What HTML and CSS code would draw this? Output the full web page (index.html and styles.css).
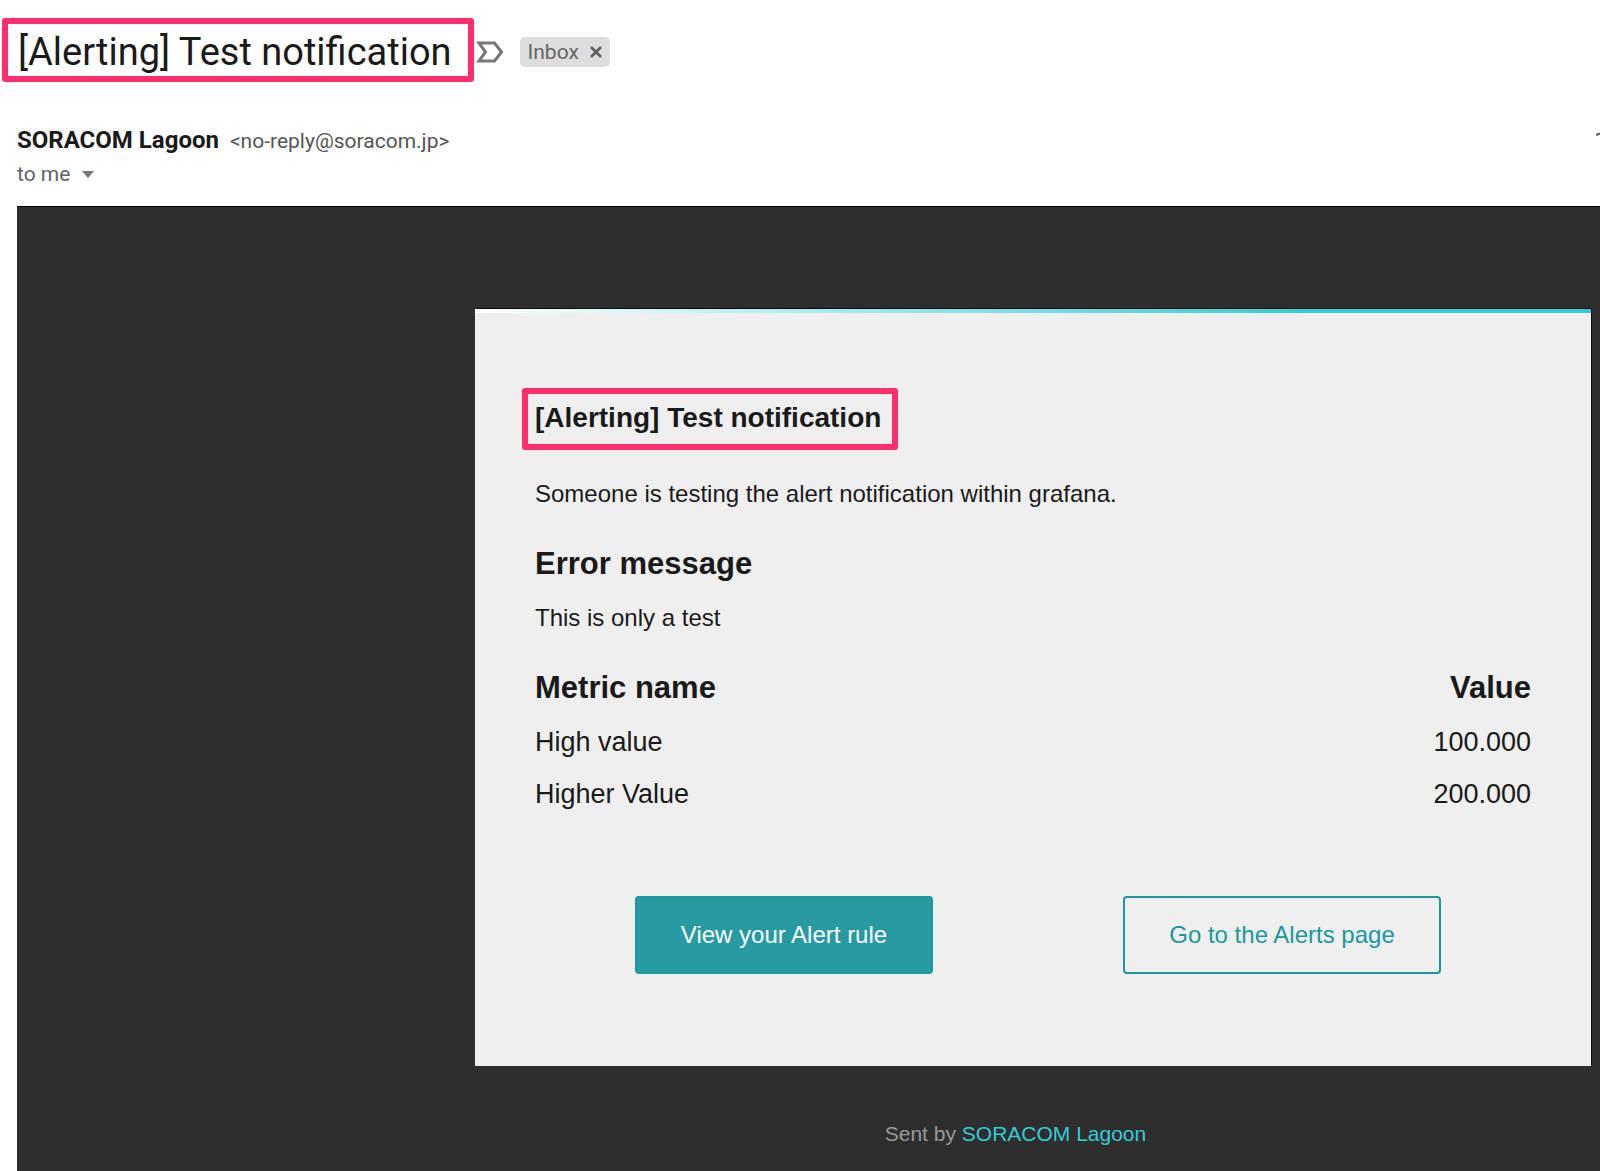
FILE: index.html
```html
<!DOCTYPE html>
<html lang="en">
<head>
<meta charset="utf-8">
<meta name="viewport" content="width=device-width, initial-scale=1">
<title>[Alerting] Test notification</title>
<link rel="stylesheet" href="styles.css">
</head>
<body>
<div class="message">
  <header class="subject">
    <h1 class="subject-title marked">[Alerting] Test notification</h1>
    <div class="subject-tags">
      <button class="importance" type="button" aria-label="Mark as important">
        <svg width="28" height="22" viewBox="0 0 28 22" fill="none" stroke="#777" stroke-width="3"><path d="M3 2H18.500L25.500 11L18.500 20H3L9.500 11Z"/></svg>
      </button>
      <span class="label">Inbox
        <button class="label-remove" type="button" aria-label="Remove label Inbox">
          <svg width="12" height="12" viewBox="0 0 12 12" stroke="#5c5c5c" stroke-width="2.500"><path d="M1 1L11 11M11 1L1 11"/></svg>
        </button>
      </span>
    </div>
  </header>

  <div class="sender">
    <div class="sender-from">
      <span class="sender-name">SORACOM Lagoon</span>
      <span class="sender-address">&lt;no-reply@soracom.jp&gt;</span>
    </div>
    <svg class="sender-time" width="4" height="4" viewBox="0 0 4 4" aria-hidden="true"><path d="M0 3L4 1.500" stroke="#555" stroke-width="2"/></svg>
  </div>
  <button class="recipient" type="button">to me
    <svg width="12" height="7" viewBox="0 0 12 7" fill="#777"><path d="M0 0H12L6 7Z"/></svg>
  </button>

  <main class="mail">
    <section class="card">
      <h2 class="card-title marked">[Alerting] Test notification</h2>
      <p class="card-text card-intro">Someone is testing the alert notification within grafana.</p>
      <h3 class="card-heading">Error message</h3>
      <p class="card-text">This is only a test</p>
      <table class="metrics">
        <thead><tr><th scope="col">Metric name</th><th scope="col">Value</th></tr></thead>
        <tbody>
          <tr><td>High value</td><td>100.000</td></tr>
          <tr><td>Higher Value</td><td>200.000</td></tr>
        </tbody>
      </table>
      <div class="actions">
        <a class="action action-primary" href="#rule">View your Alert rule</a>
        <a class="action" href="#alerts">Go to the Alerts page</a>
      </div>
    </section>
    <footer class="mail-footer">Sent by <a href="#lagoon">SORACOM Lagoon</a></footer>
  </main>
</div>
</body>
</html>
```
FILE: styles.css
```css
* { box-sizing: border-box; }

body {
  margin: 0;
  background: #fff;
  color: #1a1a1a;
  font-family: Roboto, "Liberation Sans", sans-serif;
}

h1, h2, h3, p { margin: 0; }

button {
  display: flex;
  border: 0;
  padding: 0;
  background: none;
  color: inherit;
  font: inherit;
}

.message {
  display: flex;
  flex-direction: column;
  min-height: 100vh;
  overflow-x: hidden;
}

.marked {
  border: 6px solid #ff2d6b;
  border-radius: 3px;
}

.subject {
  display: flex;
  align-items: center;
  padding: 18px 2px 0;
}

.subject-title {
  padding: 4px 16px 0 10px;
  font-size: 38px;
  font-weight: 400;
  line-height: 48px;
}

.subject-tags {
  display: flex;
  align-items: center;
  gap: 16px;
  padding: 3px 0 0 2px;
}

.label {
  display: flex;
  align-items: center;
  gap: 11px;
  height: 30px;
  padding: 0 8px;
  border-radius: 5px;
  background: #ddd;
  color: #666;
  font-size: 21px;
}

.sender {
  display: flex;
  justify-content: space-between;
  align-items: flex-start;
  margin-top: 44px;
  padding-left: 17px;
  line-height: 28px;
}

.sender-from {
  display: flex;
  align-items: baseline;
  gap: 11px;
}

.sender-name {
  font-size: 24px;
  font-weight: 700;
}

.sender-address {
  color: #555;
  font-size: 21px;
}

.sender-time { margin-top: 6px; }

.recipient {
  align-self: flex-start;
  align-items: center;
  gap: 12px;
  margin: 5px 0 18px 17px;
  color: #5f6368;
  font-size: 21px;
  line-height: 28px;
}

.mail {
  flex: 1;
  margin-left: 17px;
  padding: 102px 9px 16px 458px;
  border-top: 1px solid #000;
  background: #2e2e2e;
  font-family: "Liberation Sans", Arial, sans-serif;
}

.card {
  display: flex;
  flex-direction: column;
  align-items: flex-start;
  padding: 79px 60px 92px;
  background: linear-gradient(90deg, #fff, #30cdd6 75%) top / 100% 4px no-repeat, #efefef;
  box-shadow: 1px -1px 0 #0c0c0c;
}

.card-title {
  margin-left: -13px;
  padding: 4px 11px 7px 7px;
  font-size: 28px;
  line-height: 39px;
}

.card-text {
  margin: 18px 0 28px;
  font-size: 24px;
  line-height: 32px;
}

.card-intro { margin: 28px 0 34px; }

.card-heading {
  font-size: 31px;
  line-height: 40px;
}

.metrics {
  width: 100%;
  border-collapse: collapse;
  font-size: 27px;
  line-height: 32px;
}

.metrics th,
.metrics td {
  padding: 10px 0;
  text-align: left;
}

.metrics th {
  padding-bottom: 12px;
  font-size: 31px;
}

.metrics th:last-child,
.metrics td:last-child { text-align: right; }

.actions {
  display: grid;
  grid-template-columns: 1fr 1fr;
  justify-items: center;
  width: 100%;
  margin-top: 76px;
}

.action {
  padding: 21px 44px;
  border: 2px solid #1a979f;
  border-radius: 4px;
  color: #1a979f;
  font-size: 24px;
  line-height: 32px;
  text-decoration: none;
}

.action-primary {
  background: #289aa2;
  color: #fff;
}

.mail-footer {
  margin-top: 54px;
  padding-right: 35px;
  color: #999;
  font-size: 21px;
  line-height: 28px;
  text-align: center;
}

.mail-footer a {
  color: #35ccd6;
  text-decoration: none;
}
```
